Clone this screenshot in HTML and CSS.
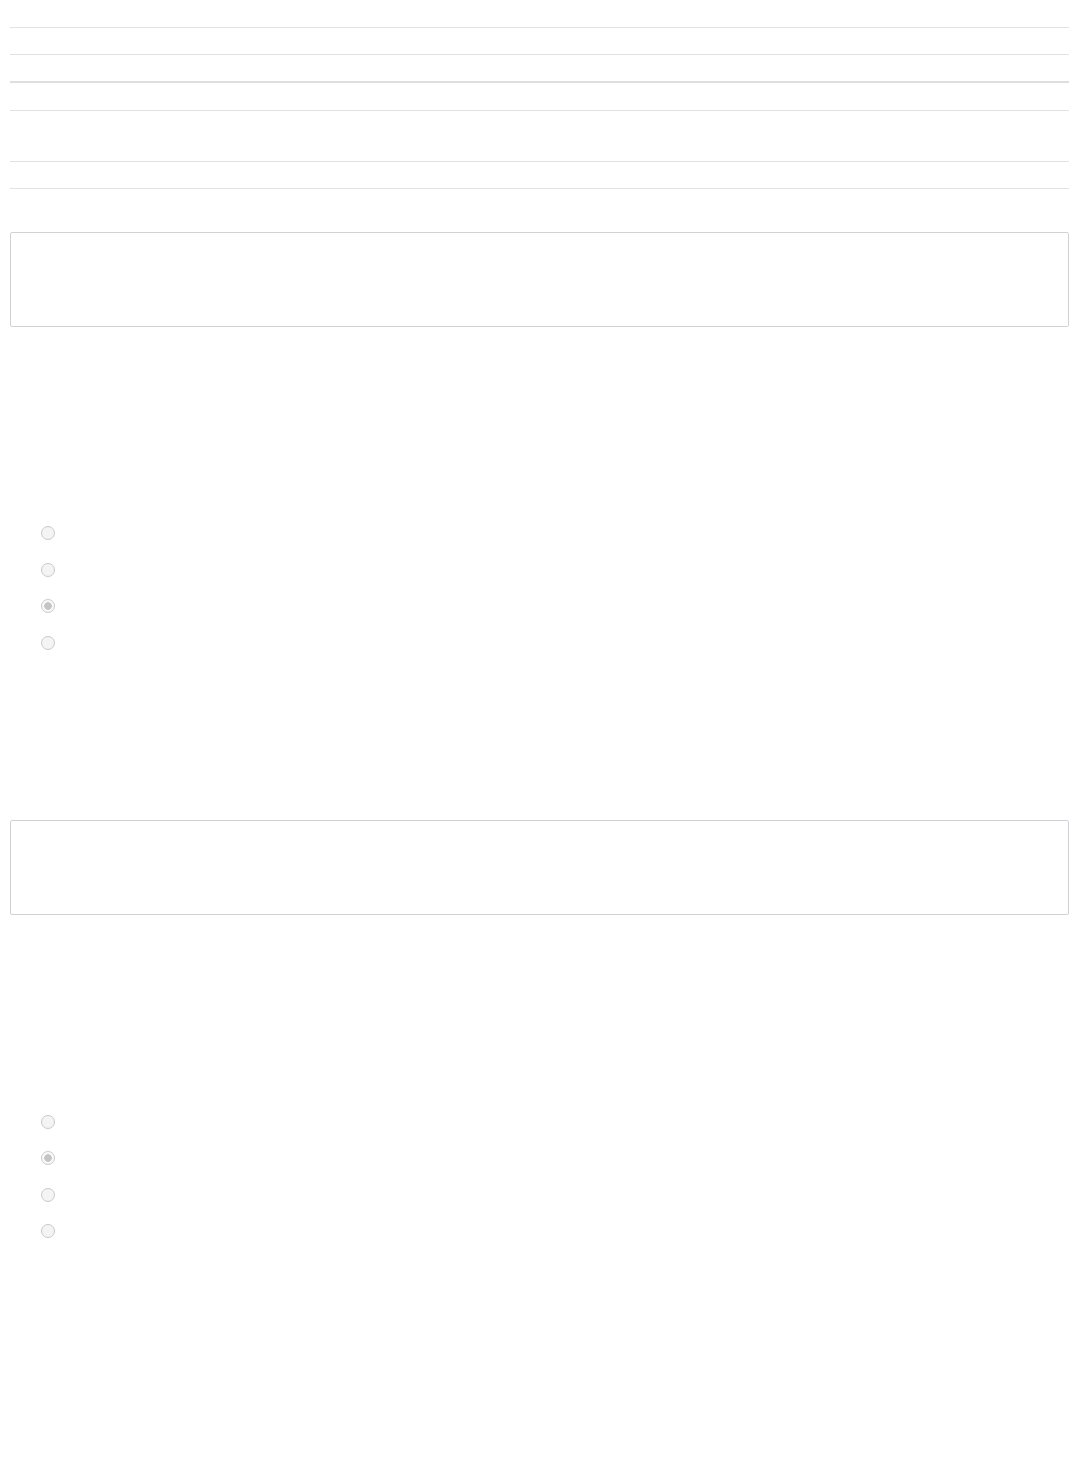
FILE: index.html
```html
<!DOCTYPE html>
<html lang="en">
<head>
    <meta charset="UTF-8">
    <meta name="viewport" content="width=device-width, initial-scale=1.0">
    <title>Quiz</title>
    <link rel="stylesheet" href="styles.css">
</head>
<body>
    <div class="quiz">
        <div class="info-table">
            <div class="info-row first"></div>
            <div class="info-row"></div>
            <div class="info-row head"></div>
            <div class="info-row tall-top"></div>
            <div class="info-row tall"></div>
            <div class="info-row"></div>
        </div>

        <div class="question">
            <div class="question-box"></div>
            <ul class="answers">
                <li><input type="radio" name="q1" disabled></li>
                <li><input type="radio" name="q1" disabled></li>
                <li><input type="radio" name="q1" checked disabled></li>
                <li><input type="radio" name="q1" disabled></li>
            </ul>
        </div>

        <div class="question">
            <div class="question-box"></div>
            <ul class="answers">
                <li><input type="radio" name="q2" disabled></li>
                <li><input type="radio" name="q2" checked disabled></li>
                <li><input type="radio" name="q2" disabled></li>
                <li><input type="radio" name="q2" disabled></li>
            </ul>
        </div>
    </div>
</body>
</html>
```

FILE: styles.css
```css
/* Quiz page, answers hidden */
body {
    margin: 0;
    background-color: #fff;
    font-family: "Open Sans", "Liberation Sans", sans-serif;
}

.quiz {
    padding: 0 9px 0 10px;
}

.info-row {
    height: 26px;
    border-bottom: 1px solid #e1e2e4;
}

.info-row.first {
    height: 27px;
}

.info-row.head {
    border-bottom: 2px solid #dcdfe2;
}

.info-row.tall-top {
    height: 27px;
}

.info-row.tall {
    height: 50px;
}

.question {
    padding-top: 43px;
    padding-bottom: 116px;
}

.question-box {
    height: 93px;
    border: 1px solid #cfd3d9;
    border-radius: 2px;
    margin-bottom: 188px;
}

.answers {
    list-style: none;
    margin: 0;
    padding: 0 0 0 30.5px;
}

.answers li {
    height: 36.6px;
    display: flex;
    align-items: center;
}

.answers input[type="radio"] {
    appearance: none;
    -webkit-appearance: none;
    width: 14px;
    height: 14px;
    margin: 0;
    border: 1px solid #c9c9c9;
    border-radius: 50%;
    background-color: #f4f4f4;
}

.answers input[type="radio"]:checked {
    background: radial-gradient(circle, #c4c4c4 0 3.5px, #fafafa 4px);
}
```
